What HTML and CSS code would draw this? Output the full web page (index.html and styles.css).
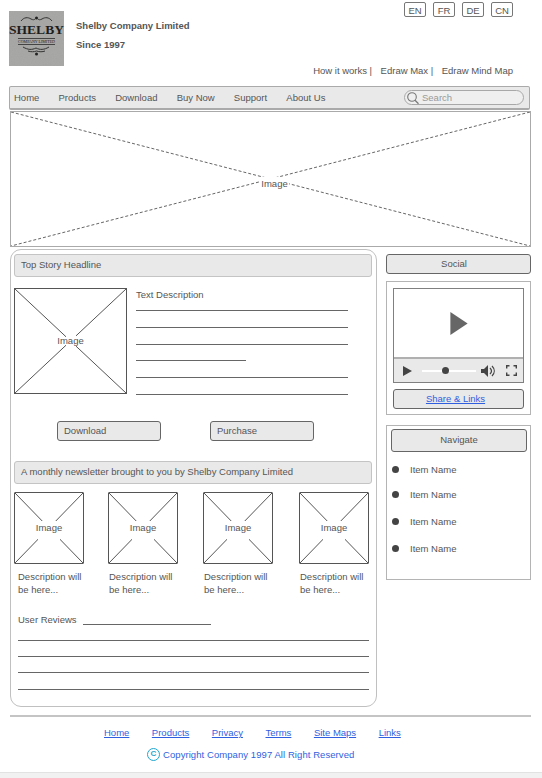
FILE: index.html
```html
<!DOCTYPE html>
<html lang="en">
<head>
    <meta charset="UTF-8">
    <meta name="viewport" content="width=device-width, initial-scale=1.0">
    <title>Shelby Company Limited</title>
    <link rel="stylesheet" href="styles.css">
</head>
<body>
<div class="page">
    <header class="top">
        <div class="brand">
            <div class="logo">
                <svg class="grain" width="55" height="55"><filter id="grain"><feTurbulence type="fractalNoise" baseFrequency="0.9" numOctaves="2"/><feColorMatrix values="0 0 0 0 0.35  0 0 0 0 0.35  0 0 0 0 0.35  0 0 0 0.7 -0.15"/></filter><rect width="55" height="55" filter="url(#grain)"/></svg>
                <svg class="flourish" viewBox="0 0 55 8" width="55" height="8"><path d="M12 6c3-4 7-4 10-2 2 1 3 1 4 0M43 6c-3-4-7-4-10-2-2 1-3 1-4 0" fill="none" stroke="#333" stroke-width="1"/><circle cx="27.500" cy="3" r="1.500" fill="#222"/></svg>
                <span class="logo-name">SHELBY</span>
                <span class="logo-sub">COMPANY LIMITED</span>
                <svg class="flourish" viewBox="0 0 55 12" width="55" height="12"><path d="M14 2c5 3 9 3 13 1 4 2 8 2 13-1M19 6c3 1 6 1 8.500 0 3 1 6 1 8.500 0" fill="none" stroke="#333" stroke-width="1"/><circle cx="27.500" cy="9" r="1.500" fill="#222"/></svg>
            </div>
            <div class="brand-text">
                <p>Shelby Company Limited</p>
                <p>Since 1997</p>
            </div>
        </div>
        <div class="top-right">
            <div class="langs">
                <span class="lang">EN</span>
                <span class="lang">FR</span>
                <span class="lang">DE</span>
                <span class="lang">CN</span>
            </div>
            <div class="toplinks">
                <span>How it works |</span>
                <span>Edraw Max |</span>
                <span>Edraw Mind Map</span>
            </div>
        </div>
    </header>

    <nav class="nav">
        <a>Home</a>
        <a>Products</a>
        <a>Download</a>
        <a>Buy Now</a>
        <a>Support</a>
        <a>About Us</a>
        <div class="search">
            <svg viewBox="0 0 14 14" width="14" height="14"><circle cx="6" cy="6" r="4.300" fill="none" stroke="#777" stroke-width="1.100"/><path d="M9 9.300l3.500 3.500" stroke="#777" stroke-width="1.300"/></svg>
            <span>Search</span>
        </div>
    </nav>

    <div class="image hero">
        <svg viewBox="0 0 100 100" preserveAspectRatio="none"><path d="M0 0L100 100M100 0L0 100" stroke="#666" stroke-width="1" stroke-dasharray="3 2" vector-effect="non-scaling-stroke" fill="none"/></svg>
        <span>Image</span>
    </div>

    <div class="columns">
        <main class="story">
            <div class="bar">Top Story Headline</div>
            <div class="feature">
                <div class="image feature-img">
                    <svg viewBox="0 0 100 100" preserveAspectRatio="none"><path d="M0 0L100 100M100 0L0 100" stroke="#555" stroke-width="1" vector-effect="non-scaling-stroke" fill="none"/></svg>
                    <span>Image</span>
                </div>
                <div class="feature-text">
                    <div class="feature-title">Text Description</div>
                    <div class="rule"></div>
                    <div class="rule"></div>
                    <div class="rule"></div>
                    <div class="rule short"></div>
                    <div class="rule"></div>
                    <div class="rule"></div>
                </div>
            </div>
            <div class="actions">
                <div class="action">Download</div>
                <div class="action">Purchase</div>
            </div>
            <div class="bar">A monthly newsletter brought to you by Shelby Company Limited</div>
            <div class="thumbs">
                <div class="thumb">
                    <div class="image thumb-img">
                        <svg viewBox="0 0 100 100" preserveAspectRatio="none"><path d="M0 0L100 100M100 0L0 100" stroke="#555" stroke-width="1" vector-effect="non-scaling-stroke" fill="none"/></svg>
                        <span>Image</span>
                    </div>
                    <p>Description will be here...</p>
                </div>
                <div class="thumb">
                    <div class="image thumb-img">
                        <svg viewBox="0 0 100 100" preserveAspectRatio="none"><path d="M0 0L100 100M100 0L0 100" stroke="#555" stroke-width="1" vector-effect="non-scaling-stroke" fill="none"/></svg>
                        <span>Image</span>
                    </div>
                    <p>Description will be here...</p>
                </div>
                <div class="thumb">
                    <div class="image thumb-img">
                        <svg viewBox="0 0 100 100" preserveAspectRatio="none"><path d="M0 0L100 100M100 0L0 100" stroke="#555" stroke-width="1" vector-effect="non-scaling-stroke" fill="none"/></svg>
                        <span>Image</span>
                    </div>
                    <p>Description will be here...</p>
                </div>
                <div class="thumb">
                    <div class="image thumb-img">
                        <svg viewBox="0 0 100 100" preserveAspectRatio="none"><path d="M0 0L100 100M100 0L0 100" stroke="#555" stroke-width="1" vector-effect="non-scaling-stroke" fill="none"/></svg>
                        <span>Image</span>
                    </div>
                    <p>Description will be here...</p>
                </div>
            </div>
            <div class="reviews">
                <div class="reviews-head"><span>User Reviews</span><div class="rule reviews-line"></div></div>
                <div class="rule"></div>
                <div class="rule"></div>
                <div class="rule"></div>
                <div class="rule"></div>
            </div>
        </main>

        <aside class="side">
            <div class="btn social">Social</div>
            <div class="card video">
                <div class="player">
                    <div class="screen">
                        <svg viewBox="0 0 18 24" width="18" height="23"><path d="M0 0L18 12L0 24Z" fill="#666"/></svg>
                    </div>
                    <div class="controls">
                        <svg viewBox="0 0 9 10" width="9" height="10"><path d="M0 0L9 5L0 10Z" fill="#444"/></svg>
                        <div class="track"><i class="knob"></i></div>
                        <svg class="volume" viewBox="0 0 14 12" width="14" height="12"><path d="M0 4H3L7 0V12L3 8H0Z" fill="#444"/><path d="M9 3c2 2 2 4 0 6M11 1c3 3 3 7 0 10" fill="none" stroke="#444" stroke-width="1.200"/></svg>
                        <svg class="full" viewBox="0 0 11 11" width="11" height="11"><path d="M0.700 3.500V0.700H3.500M7.500 0.700H10.300V3.500M10.300 7.500V10.300H7.500M3.500 10.300H0.700V7.500" fill="none" stroke="#444" stroke-width="1.400"/></svg>
                    </div>
                </div>
                <div class="btn share"><a href="#">Share &amp; Links</a></div>
            </div>
            <div class="card navigate">
                <div class="btn nav-title">Navigate</div>
                <ul class="items">
                    <li>Item Name</li>
                    <li>Item Name</li>
                    <li>Item Name</li>
                    <li>Item Name</li>
                </ul>
            </div>
        </aside>
    </div>

    <footer class="foot">
        <div class="foot-links">
            <a href="#">Home</a>
            <a href="#">Products</a>
            <a href="#">Privacy</a>
            <a href="#">Terms</a>
            <a href="#">Site Maps</a>
            <a href="#">Links</a>
        </div>
        <div class="copy">
            <span class="copy-icon">C</span>
            <span class="copy-text">Copyright Company 1997 All Right Reserved</span>
        </div>
    </footer>
</div>
</body>
</html>
```

FILE: styles.css
```css
* {
    box-sizing: border-box;
}

html, body {
    margin: 0;
    height: 100%;
}

body {
    background-color: #f1f1f1;
    font-family: "Liberation Sans", Arial, sans-serif;
    font-size: 9.5px;
    color: #555;
    overflow: hidden;
}

p {
    margin: 0;
}

.page {
    height: 773px;
    background-color: white;
    border-bottom: 1px solid #e2e2e2;
    padding: 0 11px 0 9px;
}

/* header */
.top {
    display: flex;
    justify-content: space-between;
    height: 86px;
}

.brand {
    display: flex;
    padding-top: 11px;
}

.logo {
    position: relative;
    width: 55px;
    height: 55px;
    background-color: #a8a8a6;
    display: flex;
    flex-direction: column;
    align-items: center;
    padding-top: 4px;
    color: #1d1d1d;
}

.grain {
    position: absolute;
    inset: 0;
}

.flourish {
    position: relative;
    display: block;
    flex: none;
}

.logo-name {
    position: relative;
    font-family: "Liberation Serif", serif;
    font-weight: bold;
    font-size: 13.500px;
    line-height: 12px;
    margin-top: 1px;
}

.logo-sub {
    position: relative;
    font-family: "Liberation Serif", serif;
    font-size: 4px;
    line-height: 5px;
    margin-top: 2px;
    border-top: 1px solid #444;
    border-bottom: 1px solid #444;
    white-space: nowrap;
}

.brand-text {
    margin-left: 12px;
    padding-top: 9px;
    font-weight: bold;
    font-size: 9.500px;
    line-height: 11px;
    color: #555;
}

.brand-text p + p {
    margin-top: 8px;
}

.top-right {
    display: flex;
    flex-direction: column;
    align-items: flex-end;
    padding-right: 18px;
}

.langs {
    display: flex;
    gap: 7px;
    padding-top: 2px;
}

.lang {
    width: 22px;
    height: 15px;
    border: 1px solid #777;
    border-radius: 2px;
    text-align: center;
    line-height: 15px;
    font-size: 9.500px;
}

.toplinks {
    margin-top: 48px;
    display: flex;
    gap: 8.500px;
    line-height: 11px;
}

/* nav bar */
.nav {
    display: flex;
    align-items: center;
    height: 24px;
    width: 521px;
    padding-left: 4px;
    gap: 19.200px;
    background-color: #e9e9e9;
    border: 1px solid #aaa;
    border-bottom-width: 2px;
    border-radius: 2px;
}

.search {
    margin-left: auto;
    margin-right: 5px;
    width: 120px;
    height: 15px;
    display: flex;
    align-items: center;
    gap: 2px;
    padding-left: 1px;
    border: 1px solid #a8a8a8;
    border-radius: 8px;
    background-color: #efefef;
    color: #999;
}

.search svg {
    flex: none;
}

/* image placeholder */
.image {
    position: relative;
    display: flex;
    align-items: center;
    justify-content: center;
    background-color: white;
    border: 1px solid #555;
}

.image svg {
    position: absolute;
    inset: 0;
    width: 100%;
    height: 100%;
}

.image span {
    position: relative;
    display: flex;
    justify-content: center;
    white-space: nowrap;
    background-color: white;
    line-height: 13px;
}

.hero {
    width: 521px;
    height: 136px;
    margin: 1px 0 0 1px;
    padding: 8px 0 0 8px;
    border-color: #aaa;
}

.hero span {
    padding: 0 1px;
}

.columns {
    display: flex;
    align-items: flex-start;
    margin: 2px 0 0 1px;
}

/* left panel */
.story {
    width: 367px;
    height: 458px;
    padding: 4px 4px 0 3px;
    border: 1px solid #c0c0c0;
    border-radius: 11px;
}

.bar {
    height: 23px;
    padding-left: 6px;
    line-height: 20px;
    background-color: #e9e9e9;
    border: 1px solid #c4c4c4;
    border-radius: 3px;
}

.feature {
    display: flex;
    margin-top: 11px;
}

.feature-img {
    width: 113px;
    height: 106px;
    flex: none;
}

.feature-img span {
    width: 10px;
    height: 14px;
}

.feature-text {
    margin-left: 9px;
    width: 212px;
}

.feature-title {
    height: 23px;
    margin-bottom: -1px;
    padding-top: 1px;
    line-height: 11px;
}

.rule {
    height: 1px;
    background-color: #666;
}

.feature-text .rule + .rule {
    margin-top: 15.800px;
}

.rule.short {
    width: 110px;
}

.actions {
    display: flex;
    gap: 49px;
    margin: 26px 0 20px 43px;
}

.action {
    width: 104px;
    height: 20px;
    padding-left: 6px;
    line-height: 18px;
    background-color: #e9e9e9;
    border: 1px solid #666;
    border-radius: 3px;
}

.thumbs {
    display: grid;
    grid-template-columns: 94px 95px 96px 70px;
    margin-top: 8px;
}

.thumb-img {
    width: 70px;
    height: 72px;
    padding-top: 10px;
    border-radius: 1px;
}

.thumb-img span {
    width: 22px;
    height: 23px;
}

.thumb p {
    width: 72px;
    margin: 6px 0 0 4px;
    line-height: 13px;
}

.thumb:nth-child(2) p {
    margin-left: 1px;
}

.thumb:nth-child(3) p,
.thumb:nth-child(4) p {
    margin-left: 1px;
}

.reviews {
    margin: 13px 0 0 4px;
    width: 351px;
}

.reviews-head {
    display: flex;
    align-items: flex-end;
    height: 16px;
    line-height: 11px;
    margin-bottom: 15px;
}

.reviews-line {
    width: 128px;
    margin: 0 0 0 6px;
}

.reviews .rule + .rule {
    margin-top: 15.200px;
}

/* right column */
.side {
    margin: 5px 0 0 9px;
    width: 145px;
}

.btn {
    text-align: center;
    background-color: #e9e9e9;
    border: 1px solid #666;
    border-radius: 3px;
}

.social {
    height: 20px;
    padding-right: 9px;
    line-height: 18px;
}

.card {
    border: 1px solid #b4b4b4;
}

.video {
    height: 134px;
    margin-top: 7px;
    padding: 6px;
}

.player {
    height: 95px;
    border: 1px solid #808080;
    display: flex;
    flex-direction: column;
}

.screen {
    flex: 1;
    display: flex;
    align-items: center;
    justify-content: center;
    padding-left: 1px;
    background-color: white;
}

.controls {
    height: 25px;
    display: flex;
    align-items: center;
    padding: 0 6px 0 9px;
    background-color: #e9e9e9;
    border-top: 2px solid #b0b0b0;
}

.track {
    position: relative;
    width: 54px;
    height: 2px;
    margin-left: 10px;
    background-color: white;
}

.knob {
    position: absolute;
    left: 20px;
    top: -2.500px;
    width: 7px;
    height: 7px;
    border-radius: 50%;
    background-color: #444;
}

.volume {
    margin-left: 5px;
}

.full {
    margin-left: auto;
}

.share {
    height: 20px;
    margin-top: 6px;
    padding-right: 6px;
    line-height: 18px;
}

.share a,
.foot a {
    color: #2f5fe0;
}

.navigate {
    height: 155px;
    margin-top: 10px;
    padding: 3px 3px 0 4px;
}

.nav-title {
    height: 23px;
    line-height: 20px;
}

.items {
    list-style: none;
    margin: 12px 0 0;
    padding: 0;
}

.items li {
    display: flex;
    align-items: center;
    height: 11px;
    margin-bottom: 16px;
    padding-left: 1px;
    line-height: 11px;
}

.items li:first-child {
    margin-bottom: 14px;
}

.items li::before {
    content: "";
    width: 7px;
    height: 7px;
    margin-right: 11px;
    border-radius: 50%;
    background-color: #444;
}

/* footer */
.foot {
    margin: 8px 0 0 1px;
    border-top: 2px solid #c4c4c4;
    width: 521px;
}

.foot-links {
    display: flex;
    gap: 22.500px;
    margin-top: 10px;
    padding-left: 94px;
    line-height: 12px;
}

.copy {
    display: flex;
    align-items: center;
    gap: 3px;
    margin-top: 9px;
    padding-left: 137px;
    color: #2f5fe0;
    line-height: 13px;
}

.copy-text {
    letter-spacing: 0.07px;
}

.copy-icon {
    width: 13px;
    height: 13px;
    border: 1.500px solid #1fa6cf;
    border-radius: 50%;
    color: #1fa6cf;
    font-size: 8px;
    font-weight: bold;
    line-height: 10px;
    text-align: center;
}
```
